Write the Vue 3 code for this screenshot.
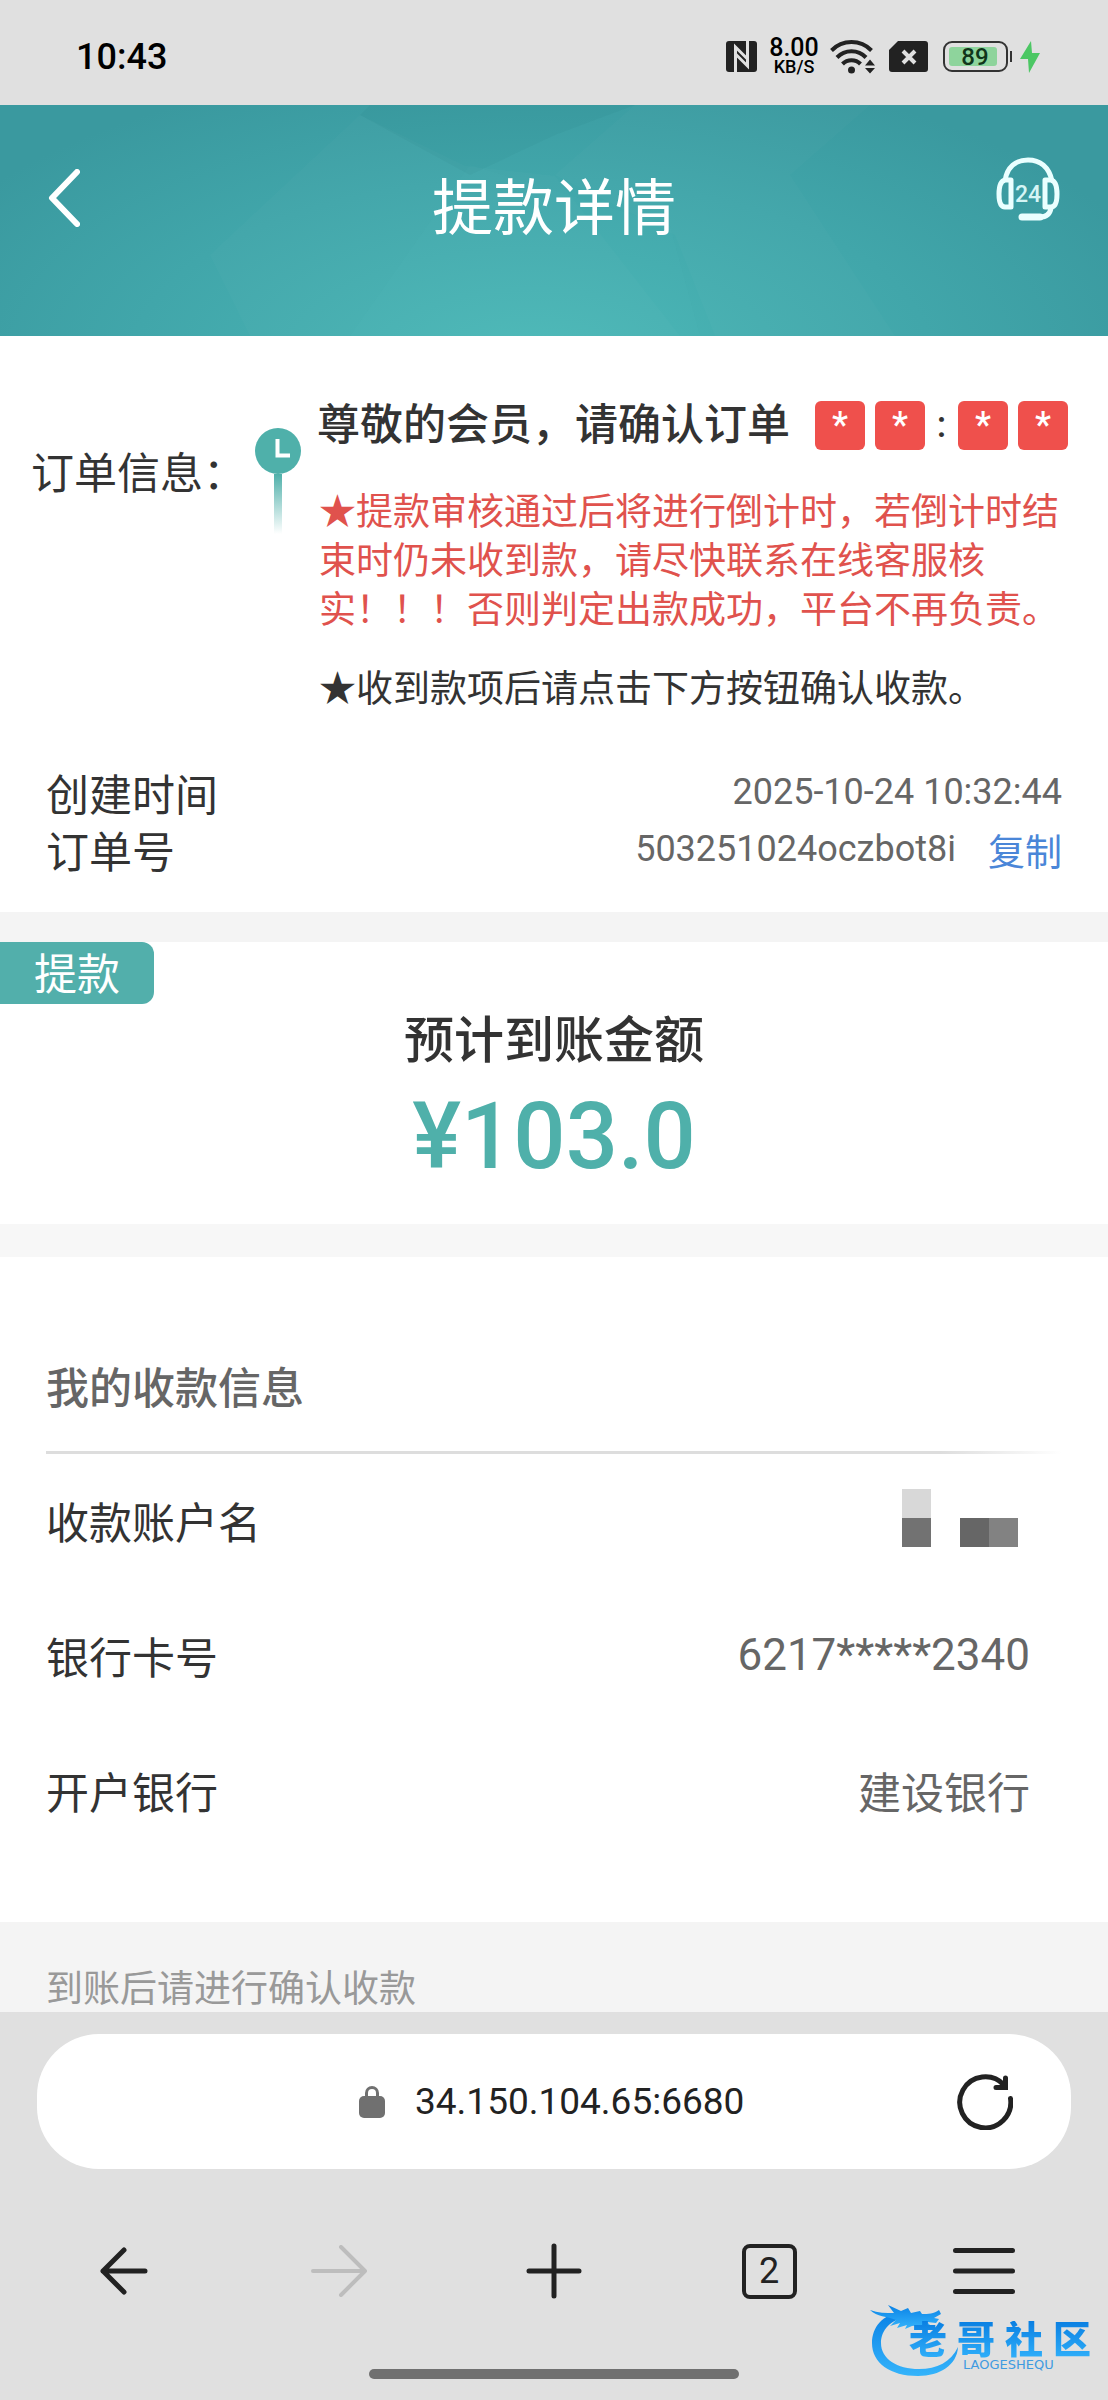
<script setup>
import { ref } from 'vue'

const countdown = ['*', '*', ':', '*', '*']
const address = ref('34.150.104.65:6680')
const mosaic = ['#d8d8d8', '', '', '', '#727272', '', '#666666', '#828282']
const brand = ['老', '哥', '社', '区']
</script>

<template>
  <div class="screen">
    <div class="status">
      <span class="clock">10:43</span>
      <div class="indicators">
        <svg class="nfc" width="31" height="31" viewBox="0 0 31 31">
          <rect width="31" height="31" rx="3" fill="#222" />
          <path d="M9.500 31V6l12 12M21.500 0v25l-12-12" fill="none" stroke="#e0e0e0" stroke-width="3" />
        </svg>
        <div class="speed">
          <span class="rate">8.00</span>
          <span class="unit">KB/S</span>
        </div>
        <svg class="wifi" width="46" height="35" viewBox="0 0 46 35">
          <g fill="none" stroke="#222" stroke-width="4">
            <path d="M1.500 11.500a28 28 0 0 1 40 0" />
            <path d="M7 18.500a20 20 0 0 1 29 0" />
            <path d="M12.500 25a12.500 12.500 0 0 1 18 0" />
          </g>
          <circle cx="21.500" cy="31" r="3.500" fill="#222" />
          <path d="M35 26.500l5-6 5 6zM35 29h10l-5 5.500z" fill="#222" />
        </svg>
        <svg class="sim" width="39" height="31" viewBox="0 0 39 31">
          <path d="M9 0h27a3 3 0 0 1 3 3v25a3 3 0 0 1-3 3H3a3 3 0 0 1-3-3V9z" fill="#222" />
          <path d="M14 10l12 12M26 10L14 22" stroke="#e0e0e0" stroke-width="4" />
        </svg>
        <div class="battery"><span class="charge">89</span></div>
        <svg class="bolt" width="20" height="32" viewBox="0 0 20 32">
          <path d="M11 0L0 18h8l1 14 11-20h-8z" fill="#4cc764" />
        </svg>
      </div>
    </div>

    <header class="header">
      <svg class="facets" viewBox="0 0 1108 231" preserveAspectRatio="none" aria-hidden="true">
        <path d="M360 10L210 150l40 81h430l-125-160-90-10z" fill="#fff" opacity=".02" />
        <path d="M360 10l110 60 85-40 80-30H370z" fill="#06484c" opacity=".04" />
        <path d="M635 0L555 70l120 60 40 101h180L790 70 870 0z" fill="#fff" opacity=".02" />
        <path d="M470 60l-120 171h350l-30-110z" fill="#7de0dc" opacity=".03" />
      </svg>
      <button class="back" aria-label="返回">
        <svg width="32" height="58" viewBox="0 0 32 58">
          <path d="M29 3L4 29l25 26" fill="none" stroke="#fff" stroke-width="6" stroke-linecap="round" stroke-linejoin="round" />
        </svg>
      </button>
      <h1 class="title">提款详情</h1>
      <button class="support" aria-label="在线客服">
        <svg width="64" height="64" viewBox="0 0 64 64">
          <g fill="none" stroke="#eaffff" stroke-width="5" stroke-linejoin="round">
            <path d="M9 24C11 10 20 3 32 3s21 7 24 21" />
            <path d="M15 23v27H9c-4 0-6-4-6-13s2-13 6-14zM49 23v27h6c4 0 6-4 6-13s-2-13-6-14z" />
            <path d="M55 51c-1 6-5 9-11 9" />
          </g>
          <path d="M26 60h18" stroke="#eaffff" stroke-width="7" stroke-linecap="round" />
          <text x="32" y="45" text-anchor="middle" font-size="23" font-weight="500" fill="#d5f5f5">24</text>
        </svg>
      </button>
    </header>

    <main>
      <section class="order">
        <div class="order-top">
          <div class="order-label">订单信息：</div>
          <div class="marker">
            <svg width="46" height="46" viewBox="0 0 46 46">
              <circle cx="23" cy="23" r="23" fill="#4fb0aa" />
              <path d="M22.500 11v16.500H35" fill="none" stroke="#fff" stroke-width="4" />
            </svg>
            <span class="stem"></span>
          </div>
          <div class="order-body">
            <div class="order-head">
              <h2>尊敬的会员，请确认订单</h2>
              <div class="countdown">
                <span v-for="(c, i) in countdown" :key="i" :class="c === ':' ? 'colon' : 'digit'">{{ c }}</span>
              </div>
            </div>
            <p class="tip warn">★提款审核通过后将进行倒计时，若倒计时结束时仍未收到款，请尽快联系在线客服核实！！！否则判定出款成功，平台不再负责。</p>
            <p class="tip">★收到款项后请点击下方按钮确认收款。</p>
          </div>
        </div>
        <dl class="meta">
          <div>
            <dt>创建时间</dt>
            <dd>2025-10-24 10:32:44</dd>
          </div>
          <div>
            <dt>订单号</dt>
            <dd>503251024oczbot8i<button class="copy">复制</button></dd>
          </div>
        </dl>
      </section>

      <section class="amount">
        <span class="tag">提款</span>
        <h2>预计到账金额</h2>
        <strong>¥103.0</strong>
      </section>

      <section class="payee">
        <h3>我的收款信息</h3>
        <hr />
        <dl>
          <div>
            <dt>收款账户名</dt>
            <dd class="mosaic">
              <i v-for="(c, i) in mosaic" :key="i" :style="{ background: c }"></i>
            </dd>
          </div>
          <div>
            <dt>银行卡号</dt>
            <dd class="card-no">6217*****2340</dd>
          </div>
          <div>
            <dt>开户银行</dt>
            <dd>建设银行</dd>
          </div>
        </dl>
      </section>

      <p class="notice">到账后请进行确认收款</p>
    </main>

    <footer class="browser">
      <div class="bar">
        <label class="address">
          <svg width="26" height="32" viewBox="0 0 26 32">
            <rect y="10" width="26" height="22" rx="5" fill="#707070" />
            <path d="M7.500 12V7a5.500 5.500 0 0 1 11 0v5" fill="none" stroke="#707070" stroke-width="3" />
          </svg>
          <input v-model="address" aria-label="网址" />
        </label>
        <button class="reload" aria-label="刷新">
          <svg width="56" height="56" viewBox="0 0 56 56" fill="none" stroke="#222" stroke-width="5" stroke-linecap="round">
            <path d="M53.500 24.500A25.500 25.500 0 1 1 47 11" />
            <path d="M48.500 4v9.500H39" />
          </svg>
        </button>
      </div>
      <nav class="nav">
        <button aria-label="后退">
          <svg width="48" height="48" viewBox="0 0 48 48">
            <path d="M24 3L3 24l21 21M3 24h42" fill="none" stroke="#222" stroke-width="5" stroke-linecap="round" stroke-linejoin="round" />
          </svg>
        </button>
        <button aria-label="前进">
          <svg width="56" height="52" viewBox="0 0 56 52">
            <path d="M30 2l24 24-24 24M54 26H2" fill="none" stroke="#bdbdbd" stroke-width="4" stroke-linecap="round" stroke-linejoin="round" />
          </svg>
        </button>
        <button aria-label="新标签页">
          <svg width="56" height="56" viewBox="0 0 56 56">
            <path d="M28 3v50M3 28h50" stroke="#222" stroke-width="5" stroke-linecap="round" />
          </svg>
        </button>
        <button aria-label="标签页"><span class="tabs">2</span></button>
        <button aria-label="菜单">
          <svg width="62" height="46" viewBox="0 0 62 46">
            <path d="M2.500 2.500h57M2.500 23h57M2.500 43.500h57" stroke="#222" stroke-width="5" stroke-linecap="round" />
          </svg>
        </button>
      </nav>
      <div class="home"></div>

      <div class="watermark">
        <svg width="92" height="72" viewBox="0 0 92 72" aria-hidden="true">
          <defs>
            <linearGradient id="dragon" x1="0" y1="0" x2="0" y2="1">
              <stop offset="0" stop-color="#0a82e6" />
              <stop offset="1" stop-color="#35b4fb" />
            </linearGradient>
          </defs>
          <g fill="url(#dragon)">
            <path d="M36 12C17 16 11 28 11 38c0 16 16 26 38 26 18 0 32-7 39-22-1 18-18 29-40 29C20 71 2 58 2 38 2 22 13 9 30 8z" />
            <path d="M0 5c8 3 16 3 24 3L18 0l13 6 7-3 3 5 9-2 2 3c6 0 12 0 17-4l2 4-7 4 5 1-3 4-9-1 5 5-12-2-8 1-7 3 2-4-10 3 3-5-10 3 6-6C17 11 7 12 0 5z" />
          </g>
        </svg>
        <div class="brand">
          <div class="brand-name"><b v-for="c in brand" :key="c">{{ c }}</b></div>
          <small>LAOGESHEQU</small>
        </div>
      </div>
    </footer>
  </div>
</template>

<style>
body {
  background: #e0e0e0;
}
</style>

<style scoped>
.screen {
  font-family: Roboto, "Noto Sans CJK SC", sans-serif;
  color: #333;
  background: #fff;
}
h1, h2, h3, p, dl, dd {
  margin: 0;
}
button {
  padding: 0;
  border: 0;
  background: none;
  font: inherit;
  color: inherit;
}
svg {
  display: block;
}

.status {
  display: flex;
  justify-content: space-between;
  align-items: center;
  height: 105px;
  padding: 8px 68px 0 76px;
  box-sizing: border-box;
  background: #e0e0e0;
  color: #000;
}
.clock {
  font-size: 36px;
  font-weight: 500;
}
.indicators {
  display: flex;
  align-items: center;
}
.speed {
  display: flex;
  flex-direction: column;
  align-items: center;
  width: 54px;
  margin: 0 9px 0 10px;
  font-weight: 500;
}
.rate {
  font-size: 25px;
  line-height: 20px;
}
.unit {
  font-size: 18px;
  line-height: 18px;
}
.sim {
  margin: 0 15px 0 13px;
}
.battery {
  position: relative;
  width: 65px;
  height: 31px;
  padding: 4px;
  box-sizing: border-box;
  border: 2px solid #333;
  border-radius: 9px;
  margin-right: 12px;
}
.battery::after {
  content: "";
  position: absolute;
  right: -6px;
  top: 8px;
  width: 2px;
  height: 11px;
  background: #333;
}
.charge {
  display: block;
  width: 48px;
  height: 100%;
  padding-left: 4px;
  box-sizing: border-box;
  border-radius: 3px;
  background: #8ed49c;
  color: #10351a;
  font-size: 24px;
  font-weight: 500;
  line-height: 20px;
  text-align: center;
}

.header {
  position: relative;
  display: flex;
  justify-content: space-between;
  align-items: flex-start;
  padding: 52px 48px 75px;
  background: radial-gradient(ellipse 60% 130% at 48% 110%, #4bb8b7, #41a6aa 60%, #3a999f);
}
.facets {
  position: absolute;
  inset: 0;
  width: 100%;
  height: 100%;
}
.back, .support {
  position: relative;
  display: flex;
  width: 64px;
}
.back {
  height: 82px;
  align-items: center;
}
.title {
  position: relative;
  font-size: 61px;
  font-weight: 400;
  line-height: 104px;
  color: #fff;
}

.order {
  padding: 65px 40px 30px 31px;
}
.order-top {
  display: flex;
}
.order-label {
  width: 224px;
  padding-top: 48px;
  font-size: 43px;
  line-height: 50px;
  white-space: nowrap;
}
.marker {
  display: flex;
  flex-direction: column;
  align-items: center;
  width: 46px;
  margin-right: 16px;
  padding-top: 27px;
}
.stem {
  width: 8px;
  height: 60px;
  background: linear-gradient(#4fb0aa, #fff);
}
.order-body {
  flex: 1;
}
.order-head {
  display: flex;
  justify-content: space-between;
  align-items: center;
  height: 49px;
  margin-bottom: 38px;
}
.order-head h2 {
  font-size: 43px;
  font-weight: 500;
  line-height: 49px;
  white-space: nowrap;
}
.countdown {
  display: flex;
  gap: 10px;
  font-size: 36px;
  font-weight: 500;
  line-height: 49px;
  text-align: center;
}
.digit {
  width: 50px;
  height: 49px;
  border-radius: 6px;
  background: #ef504c;
  color: #fff;
}
.colon {
  width: 13px;
}
.tip {
  padding-left: 2px;
  font-size: 37px;
  line-height: 49px;
}
.warn {
  margin-bottom: 30px;
  color: #e0524d;
}
.meta {
  margin-top: 54px;
  padding: 0 6px 0 15px;
}
.meta div {
  display: flex;
  justify-content: space-between;
}
.meta dt {
  font-size: 43px;
  line-height: 57px;
}
.meta dd {
  display: flex;
  font-size: 36px;
  line-height: 49px;
  color: #666;
}
.copy {
  margin-left: 32px;
  font-size: 37px;
  line-height: 49px;
  color: #4a86d8;
}

.amount {
  display: flex;
  flex-direction: column;
  align-items: center;
  padding-bottom: 39px;
  border-top: 30px solid #f4f4f4;
  border-bottom: 33px solid #f7f7f7;
}
.tag {
  align-self: flex-start;
  width: 154px;
  padding-top: 4px;
  margin-bottom: 7px;
  border-radius: 0 12px 12px 0;
  background: #52afab;
  color: #fff;
  font-size: 43px;
  line-height: 58px;
  text-align: center;
}
.amount h2 {
  margin-bottom: 18px;
  font-size: 50px;
  font-weight: 500;
  line-height: 60px;
}
.amount strong {
  font-size: 92px;
  font-weight: 500;
  line-height: 96px;
  color: #4fb0aa;
}

.payee {
  padding: 102px 46px 63px;
  font-size: 43px;
}
.payee h3 {
  font-size: 43px;
  font-weight: 500;
  line-height: 60px;
  color: #666;
}
.payee hr {
  height: 3px;
  margin: 32px 0 0;
  border: 0;
  background: linear-gradient(90deg, #ddd 88%, #fff);
}
.payee dl div {
  display: flex;
  justify-content: space-between;
  align-items: center;
  height: 135px;
  padding: 0 32px 3px 0;
  box-sizing: border-box;
}
.payee dd {
  color: #666;
}
.payee .card-no {
  font-size: 44px;
}
.mosaic {
  display: grid;
  grid-template-columns: repeat(4, 29px);
  grid-auto-rows: 29px;
  padding: 0 12px 4px 0;
}

.notice {
  padding: 46px 46px 0;
  background: #f4f4f4;
  color: #999;
  font-size: 37px;
  line-height: 44px;
}

.browser {
  position: relative;
  padding: 22px 16px 21px;
  background: #e0e0e0;
}
.bar {
  display: grid;
  grid-template-columns: 1fr auto 1fr;
  align-items: center;
  height: 135px;
  margin: 0 21px;
  padding: 0 58px;
  border-radius: 62px;
  background: #fff;
}
.address {
  grid-column: 2;
  display: flex;
  align-items: center;
  gap: 30px;
}
.address input {
  width: 334px;
  padding: 0;
  border: 0;
  outline: 0;
  background: none;
  font: inherit;
  font-size: 37px;
  color: #222;
}
.reload {
  justify-self: end;
}
.nav {
  display: flex;
  margin: 52px 0 48px;
}
.nav button {
  flex: 1;
  display: flex;
  justify-content: center;
  align-items: center;
  height: 100px;
}
.tabs {
  width: 55px;
  height: 55px;
  box-sizing: border-box;
  border: 4px solid #222;
  border-radius: 8px;
  font-size: 36px;
  line-height: 47px;
  color: #222;
}
.home {
  width: 370px;
  height: 10px;
  margin: 0 auto;
  border-radius: 5px;
  background: #707070;
}
.watermark {
  position: absolute;
  right: 17px;
  bottom: 23px;
  width: 221px;
  height: 72px;
}
.brand {
  position: absolute;
  right: 0;
  top: 16px;
  width: 182px;
}
.brand-name {
  display: flex;
  justify-content: space-between;
  font-size: 38px;
  line-height: 38px;
  background: linear-gradient(#0a7fe2, #30b0fa);
  background-clip: text;
  color: transparent;
}
.brand-name b {
  font-weight: 900;
}
.brand small {
  display: block;
  margin-left: 54px;
  font-family: "DejaVu Sans", sans-serif;
  font-size: 13px;
  line-height: 12px;
  color: #3f9be0;
}
</style>
